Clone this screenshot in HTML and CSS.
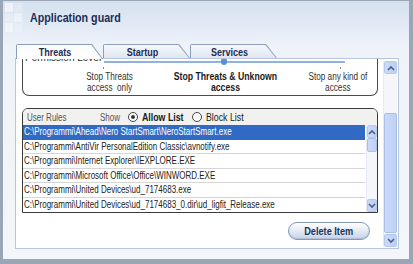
FILE: index.html
```html
<!DOCTYPE html>
<html>
<head>
<meta charset="utf-8">
<title>Application guard</title>
<link rel="stylesheet" href="styles.css">
</head>
<body>
<div class="window">
  <header class="titlebar">
    <svg class="logo" width="24" height="34" viewBox="0 0 24 34">
      <rect x="2" y="1" width="8" height="9" fill="#ffffff" opacity="0.55"/>
      <rect x="11" y="11" width="8" height="9" fill="#ffffff" opacity="0.45"/>
      <rect x="2" y="11" width="8" height="9" fill="#ffffff" opacity="0.25"/>
      <rect x="2" y="21" width="8" height="9" fill="#ffffff" opacity="0.5"/>
      <rect x="11" y="21" width="8" height="9" fill="#ffffff" opacity="0.2"/>
      <rect x="11" y="1" width="8" height="9" fill="#ffffff" opacity="0.2"/>
    </svg>
    <h1 class="title">Application guard</h1>
  </header>

  <nav class="tabs">
    <div class="tab active"><div class="tab-face"><span class="tab-label">Threats</span></div></div>
    <div class="tab"><div class="tab-face"><span class="tab-label">Startup</span></div></div>
    <div class="tab"><div class="tab-face"><span class="tab-label">Services</span></div></div>
  </nav>

  <section class="panel">
    <div class="viewport">
      <div class="scroller">
        <div class="level-box">
          <div class="level-head">
            <span class="level-title">Permission Level</span>
            <div class="track"><span class="knob"></span></div>
          </div>
          <div class="ticks"></div>
          <div class="levels">
            <div class="lvl">Stop Threats<br>access&nbsp; only</div>
            <div class="lvl lvl-on">Stop Threats &amp; Unknown<br>access</div>
            <div class="lvl">Stop any kind of<br>access</div>
          </div>
        </div>

        <div class="rules">
          <div class="rules-head">
            <span class="rh-label"><span class="sx">User Rules</span></span>
            <span class="rh-show"><span class="sx">Show</span></span>
            <span class="radio checked"></span><span class="rh-opt bold"><span class="sx">Allow List</span></span>
            <span class="radio"></span><span class="rh-opt"><span class="sx">Block List</span></span>
          </div>
          <div class="rules-body">
            <ul class="rows">
              <li class="row selected"><span class="sx">C:\Programmi\Ahead\Nero StartSmart\NeroStartSmart.exe</span></li>
              <li class="row"><span class="sx">C:\Programmi\AntiVir PersonalEdition Classic\avnotify.exe</span></li>
              <li class="row"><span class="sx">C:\Programmi\Internet Explorer\IEXPLORE.EXE</span></li>
              <li class="row"><span class="sx">C:\Programmi\Microsoft Office\Office\WINWORD.EXE</span></li>
              <li class="row"><span class="sx">C:\Programmi\United Devices\ud_7174683.exe</span></li>
              <li class="row"><span class="sx">C:\Programmi\United Devices\ud_7174683_0.dir\ud_ligfit_Release.exe</span></li>
            </ul>
            <div class="sbar small">
              <div class="sb-btn"><svg width="8" height="6" viewBox="0 0 8 6"><path d="M1 5 L4 2 L7 5" fill="none" stroke="#4d6185" stroke-width="1.6"/></svg></div>
              <div class="sb-track"><div class="sb-thumb small-thumb"></div></div>
              <div class="sb-btn"><svg width="8" height="6" viewBox="0 0 8 6"><path d="M1 1 L4 4 L7 1" fill="none" stroke="#4d6185" stroke-width="1.6"/></svg></div>
            </div>
          </div>
        </div>

        <div class="actions">
          <button class="btn"><span class="btn-label">Delete Item</span></button>
        </div>
      </div>
    </div>
    <div class="sbar big">
      <div class="sb-btn"><svg width="8" height="6" viewBox="0 0 8 6"><path d="M1 5 L4 2 L7 5" fill="none" stroke="#4d6185" stroke-width="1.6"/></svg></div>
      <div class="sb-track"><div class="sb-thumb big-thumb"></div></div>
      <div class="sb-btn"><svg width="8" height="6" viewBox="0 0 8 6"><path d="M1 1 L4 4 L7 1" fill="none" stroke="#4d6185" stroke-width="1.6"/></svg></div>
    </div>
  </section>
</div>
</body>
</html>
```
FILE: styles.css
```css
* { box-sizing: border-box; }
html, body { margin: 0; padding: 0; }
body {
  width: 413px;
  height: 264px;
  overflow: hidden;
  background: #ffffff;
  font-family: "Liberation Sans", Arial, sans-serif;
  color: #222;
}

/* narrow rendering of the small UI text (screenshot is horizontally condensed) */
.sx {
  display: inline-block;
  transform: scaleX(0.8);
  transform-origin: 0 50%;
}

.window {
  width: 413px;
  height: 264px;
  border-style: solid;
  border-color: #9aa6b5;
  border-width: 1px 4px 5px 3px;
  background: linear-gradient(#d6e1ef 0px, #e3ebf5 28px, #eef3f9 44px, #f3f6fa 100%);
  display: flex;
  flex-direction: column;
}

/* title */
.titlebar {
  height: 43px;
  display: flex;
  align-items: flex-start;
}
.logo { display: block; margin-top: 1px; flex: none; }
.title {
  margin: 10px 0 0 3px;
  font-size: 12px;
  line-height: 14px;
  font-weight: bold;
  color: #1d2c58;
  transform: scaleX(0.89);
  transform-origin: 0 50%;
  white-space: nowrap;
}

/* tabs */
.tabs {
  display: flex;
  height: 14px;
  padding-left: 13px;
}
.tab {
  width: 87px;
  height: 14px;
  padding: 1px 1px 0 1px;
  background: #8a9fbe;
  clip-path: polygon(0 0, calc(100% - 11px) 0, 100% 100%, 0 100%);
  border-radius: 2px 0 0 0;
}
.tab-face {
  height: 13px;
  padding-right: 8px;
  clip-path: polygon(0 0, calc(100% - 10.6px) 0, 100% 100%, 0 100%);
  background: linear-gradient(#f6f8fc, #dfe7f2);
  font-size: 10px;
  line-height: 15px;
  font-weight: bold;
  color: #1f2d55;
  text-align: center;
}
.tab-label { display: inline-block; transform: scaleX(0.9); }
.tab.active { height: 15px; margin-bottom: -1px; position: relative; z-index: 1; }
.tab.active .tab-face { height: 14px; background: linear-gradient(#fbfcfe, #ffffff); }

/* panel */
.panel {
  margin: 0 10px 0 12px;
  height: 191px;
  border: 1px solid #b9c6d8;
  background: #ffffff;
  display: flex;
}
.viewport {
  flex: 1;
  overflow: hidden;
}
.scroller {
  margin-top: -11px;
  padding-left: 6px;
  padding-right: 5px;
}

/* permission level box */
.level-box {
  border: 1px solid #4a4a4a;
  border-top: none;
  border-radius: 0 0 7px 7px;
  height: 48px;
}
.level-head {
  display: flex;
  align-items: flex-end;
  height: 15px;
}
.level-title {
  width: 81px;
  padding-left: 2px;
  font-size: 10px;
  line-height: 10px;
  color: #333;
}
.track {
  position: relative;
  width: 241px;
  height: 2px;
  background: #8fb2de;
}
.knob {
  position: absolute;
  left: 117px;
  top: -2px;
  width: 6px;
  height: 6px;
  border-radius: 1px 1px 3px 3px;
  background: #5d8fd0;
}
.ticks {
  height: 8px;
  margin-left: 80px;
  width: 243px;
  background:
    linear-gradient(#888, #888) 0 4px / 1px 2px no-repeat,
    linear-gradient(#888, #888) 237px 4px / 1px 2px no-repeat;
}
.levels {
  display: grid;
  grid-template-columns: 120px 110px 116px;
  padding-left: 27px;
  font-size: 10px;
  line-height: 11px;
  color: #333;
}
.lvl {
  justify-self: center;
  text-align: center;
  white-space: nowrap;
  transform: scaleX(0.82);
}
.lvl-on { font-weight: bold; color: #1b1b1b; transform: scaleX(0.87); }

/* rules list */
.rules {
  margin-top: 12px;
  border: 1px solid #3a3a3a;
  border-radius: 6px 6px 0 0;
  overflow: hidden;
}
.rules-head {
  height: 16px;
  display: flex;
  align-items: center;
  background: #f1f1f0;
  font-size: 10px;
  color: #555;
  padding-left: 4px;
  white-space: nowrap;
}
.rh-label { width: 73px; }
.rh-show { width: 28px; }
.rh-opt { margin-left: 4px; color: #1a1a1a; font-size: 11px; }
.rh-opt.bold { font-weight: bold; width: 50px; }
.radio {
  flex: none;
  width: 10px;
  height: 10px;
  border-radius: 50%;
  border: 1px solid #444;
  background: #fff;
  display: inline-flex;
  align-items: center;
  justify-content: center;
}
.radio.checked::after {
  content: "";
  width: 4px;
  height: 4px;
  border-radius: 50%;
  background: #2f3b2f;
}

.rules-body { display: flex; }
.rows {
  list-style: none;
  margin: 0;
  padding: 0;
  flex: 1;
  min-width: 0;
}
.row {
  height: 15px;
  border-bottom: 1px solid #d6d6d6;
  padding-left: 1px;
  font-size: 10px;
  line-height: 14px;
  white-space: nowrap;
  overflow: hidden;
  color: #222;
}
.row:nth-child(even) { height: 14px; line-height: 13px; }
.row:last-child { border-bottom: none; }
.row.selected { background: #316ac5; color: #fff; border-bottom-color: #316ac5; }

/* scrollbars */
.sbar {
  display: flex;
  flex-direction: column;
  background: #f4f6fa;
  border-left: 1px solid #e6ebf3;
}
.sbar.small { width: 11px; margin-left: 1px; }
.sbar.big { width: 14px; margin: 2px 1px 1px 0; }
.sb-btn {
  height: 13px;
  flex: none;
  display: flex;
  align-items: center;
  justify-content: center;
  background: linear-gradient(90deg, #cbdaf7, #bccff5);
  border: 1px solid #b5c8ef;
  border-radius: 2px;
}
.sb-track { flex: 1; }
.sb-thumb {
  background: linear-gradient(90deg, #cbdaf8, #bfd1f5);
  border: 1px solid #a9bfe9;
  border-radius: 2px;
}
.small-thumb { height: 14px; }
.big-thumb { height: 120px; margin-top: 39px; }

/* actions */
.actions {
  display: flex;
  justify-content: flex-end;
  padding-top: 9px;
  padding-right: 8px;
}
.btn {
  width: 82px;
  height: 18px;
  border: 1px solid #8799b8;
  border-radius: 9px;
  background: linear-gradient(#ffffff 0%, #e6ecf5 45%, #c6d3e8 100%);
  box-shadow: inset 0 -1px 1px #b0bfd8;
  font-family: "Liberation Sans", Arial, sans-serif;
  font-size: 10px;
  font-weight: bold;
  color: #22345e;
  padding: 0;
}
.btn-label { display: inline-block; transform: scaleX(0.92); }
```
